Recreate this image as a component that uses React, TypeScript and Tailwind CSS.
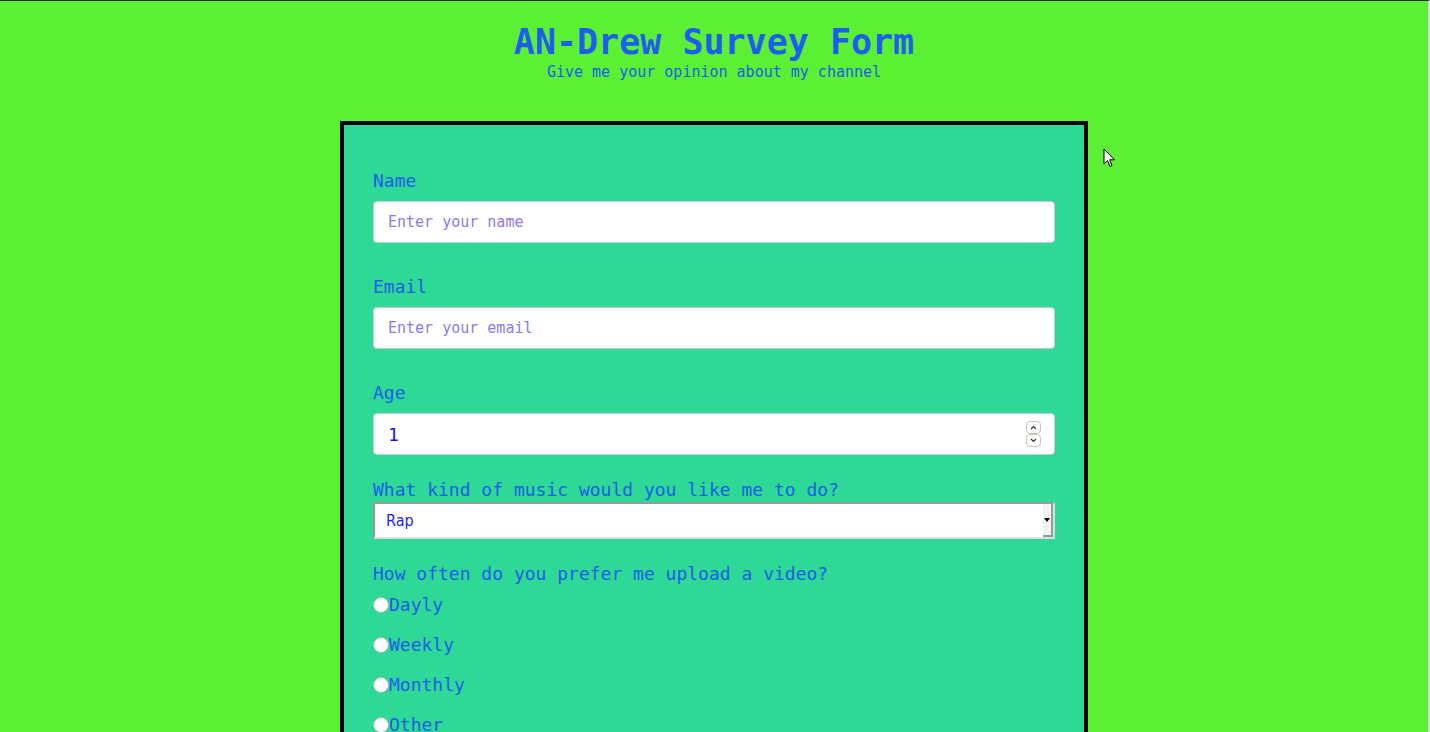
import React from 'react';

const mono = "font-['DejaVu_Sans_Mono',monospace]";

const FREQS = ['Dayly', 'Weekly', 'Monthly', 'Other'];

const Spin: React.FC<{ up?: boolean }> = ({ up }) => (
  <span className="flex h-[13px] w-[15px] items-center justify-center rounded-[4px] border border-[#c9c3bc] bg-white">
    <svg width="7" height="5" viewBox="0 0 7 5">
      <path d={up ? 'M1 4 L3.5 1.5 L6 4' : 'M1 1 L3.5 3.5 L6 1'} fill="none" stroke="#333" strokeWidth="1.2" />
    </svg>
  </span>
);

const App: React.FC = () => {
  return (
    <div className={`relative h-[732px] overflow-hidden bg-[#5bf033] border-t border-[#2a2a2a] border-r-2 border-r-[#dcdcdc] ${mono}`}>
      <header className="pt-[21px] text-center text-[#1c5ff0]">
        <h1 className="text-[35px] font-bold leading-[40px]">AN-Drew Survey Form</h1>
        <p className="mt-px text-[15px] leading-[18px] text-[#1a5ee8]">Give me your opinion about my channel</p>
      </header>

      <form className="mx-auto mt-[40px] w-[748px] border-4 border-black bg-[#2ed897] px-[29px] pt-[45px] pb-10 text-[#1a5ee8]">
        <label className="block text-[18px] leading-[21px]">Name</label>
        <input
          type="text"
          placeholder="Enter your name"
          className="mt-[10px] block h-[42px] w-full rounded-[4px] border border-[#c8c8c8] bg-white px-[14px] text-[15px] outline-none placeholder:text-[#8a7bf0]"
        />

        <label className="mt-[33px] block text-[18px] leading-[21px]">Email</label>
        <input
          type="email"
          placeholder="Enter your email"
          className="mt-[10px] block h-[42px] w-full rounded-[4px] border border-[#c8c8c8] bg-white px-[14px] text-[15px] outline-none placeholder:text-[#8a7bf0]"
        />

        <label className="mt-[33px] block text-[18px] leading-[21px]">Age</label>
        <div className="relative mt-[10px]">
          <input
            type="text"
            defaultValue="1"
            className="block h-[42px] w-full rounded-[4px] border border-[#c8c8c8] bg-white pl-[14px] pr-[40px] text-[18px] text-[#1414e6] outline-none"
          />
          <span className="pointer-events-none absolute right-[14px] top-[8px] flex flex-col">
            <Spin up />
            <Spin />
          </span>
        </div>

        <label className="mt-[24px] block text-[18px] leading-[21px]">What kind of music would you like me to do?</label>
        <div className="relative mt-[2px] h-[37px]">
          <select className="block h-full w-full appearance-none border-2 border-t-[#999] border-l-[#999] border-b-[#dedede] border-r-[#dedede] bg-white pl-[11px] font-['DejaVu_Sans',sans-serif] text-[16px] [font-stretch:condensed] text-[#2020f0] outline-none">
            <option>Rap</option>
            <option>Pop</option>
            <option>Rock</option>
          </select>
          <span className="pointer-events-none absolute right-[2px] top-[2px] bottom-[2px] flex w-[10px] items-center justify-center border-r-2 border-b-2 border-[#9a9a9a] bg-[#f2f2f2]">
            <span className="h-0 w-0 border-x-[3.5px] border-t-[4px] border-x-transparent border-t-black" />
          </span>
        </div>

        <p className="mt-[24px] text-[18px] leading-[21px]">How often do you prefer me upload a video?</p>
        <div className="mt-[10px] flex flex-col gap-[19px]">
          {FREQS.map(f => (
            <label key={f} className="flex items-center text-[18px] leading-[21px]">
              <span className="h-[16px] w-[16px] rounded-full border border-[#b0b0b0] bg-white" />
              <span>{f}</span>
            </label>
          ))}
        </div>
      </form>

      <svg className="absolute left-[1103px] top-[147px]" width="13" height="20" viewBox="0 0 13 20">
        <path d="M1 1 L1 16 L4.5 12.5 L7 18.5 L9 17.6 L6.6 11.8 L11.5 11.8 Z" fill="#fff" stroke="#000" strokeWidth="1" strokeLinejoin="round" />
      </svg>
    </div>
  );
};

export default App;
